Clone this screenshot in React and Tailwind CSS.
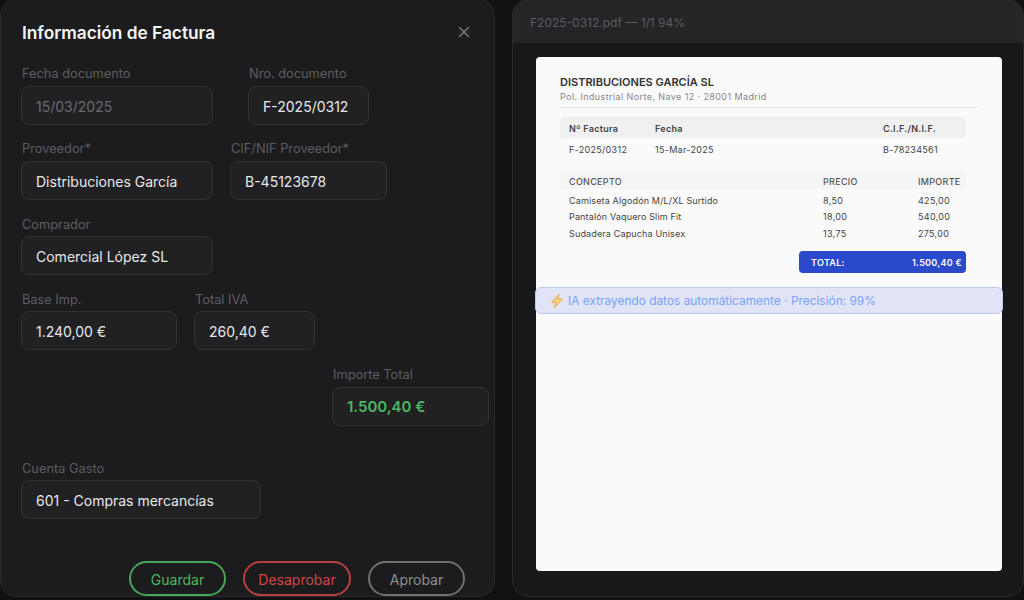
import React from 'react'
import { X } from 'lucide-react'

function Field({ label, value, width, dim, green, tight, className = '' }) {
  return (
    <div className={`flex flex-col ${className}`} style={{ width }}>
      <label className={`h-[13px] pl-px text-[12.8px] leading-[13px] text-[#5c5c61] ${tight ? 'mb-[5px]' : 'mb-[6px]'}`}>{label}</label>
      <div className={`h-[39px] flex items-center pl-[14px] pt-[2px] rounded-lg border border-[#323236] bg-[#212123] text-[14px] ${dim ? 'text-[#6a6a6f]' : green ? 'text-[#4cb860] font-semibold text-[15px]' : 'text-[#e8e8ea]'}`}>
        {value}
      </div>
    </div>
  )
}

function ActionButton({ children, className }) {
  return (
    <button className={`h-[35px] pt-[1px] rounded-full border-2 text-[14px] ${className}`}>{children}</button>
  )
}

const LINES = [
  { name: 'Camiseta Algodón M/L/XL Surtido', price: '8,50', total: '425,00', mt: 'mt-[6px]' },
  { name: 'Pantalón Vaquero Slim Fit', price: '18,00', total: '540,00', mt: 'mt-[4px]' },
  { name: 'Sudadera Capucha Unisex', price: '13,75', total: '275,00', mt: 'mt-[5px]' },
]

function InvoiceForm() {
  return (
    <section className="w-[495px] h-[598px] -mt-px shrink-0 rounded-2xl border border-[#2a2a2d] bg-[#1c1c1e] pl-[20px] pr-[5px] flex flex-col">
      <div className="flex items-center justify-between h-[24px] mt-[20px] pr-[16px]">
        <h1 className="pl-px pt-px text-[17.3px] font-semibold text-[#f5f5f5]">Información de Factura</h1>
        <X size={18} strokeWidth={2} className="text-[#77777c]" />
      </div>
      <div className="flex gap-[35px] mt-[23px]">
        <Field label="Fecha documento" value="15/03/2025" width={192} dim />
        <Field label="Nro. documento" value="F-2025/0312" width={121} />
      </div>
      <div className="flex gap-[17px] mt-[17px]">
        <Field label="Proveedor*" value="Distribuciones García" width={192} />
        <Field label="CIF/NIF Proveedor*" value="B-45123678" width={157} />
      </div>
      <Field label="Comprador" value="Comercial López SL" width={192} tight className="mt-[18px]" />
      <div className="flex gap-[17px] mt-[18px]">
        <Field label="Base Imp." value="1.240,00 €" width={156} tight />
        <Field label="Total IVA" value="260,40 €" width={121} tight />
      </div>
      <Field label="Importe Total" value="1.500,40 €" width={157} green className="mt-[18px] ml-[311px]" />
      <Field label="Cuenta Gasto" value="601 - Compras mercancías" width={240} tight className="mt-[36px]" />
      <div className="flex gap-[17px] mt-[42px] pl-[108px]">
        <ActionButton className="w-[97px] border-[#47a558] text-[#4cb860]">Guardar</ActionButton>
        <ActionButton className="w-[108px] border-[#b84040] text-[#d04545]">Desaprobar</ActionButton>
        <ActionButton className="w-[97px] border-[#6f6f74] text-[#8e8e93]">Aprobar</ActionButton>
      </div>
    </section>
  )
}

function PdfPage() {
  return (
    <div className="h-[514px] rounded bg-[#fafafa] pt-[19px] flex flex-col">
      <div className="mx-[24px] h-[32px] border-b border-[#e6e6e6]">
        <p className="text-[11px] leading-[13px] font-semibold text-[#333]">DISTRIBUCIONES GARCÍA SL</p>
        <p className="text-[9px] leading-[11px] mt-[2px] tracking-[0.4px] text-[#888]">Pol. Industrial Norte, Nave 12 · 28001 Madrid</p>
      </div>
      <div className="ml-[24px] w-[406px] mt-[9px] text-[9px] tracking-[0.3px]">
        <div className="flex items-center h-[21px] pl-[9px] pt-[3px] rounded-sm bg-[#f0f0f0] font-semibold text-[#444]">
          <span className="w-[86px]">Nº Factura</span>
          <span className="w-[228px]">Fecha</span>
          <span>C.I.F./N.I.F.</span>
        </div>
        <div className="flex items-center h-[22px] pl-[9px] pt-[2px] text-[#444]">
          <span className="w-[86px]">F-2025/0312</span>
          <span className="w-[228px]">15-Mar-2025</span>
          <span>B-78234561</span>
        </div>
      </div>
      <div className="ml-[24px] w-[406px] mt-[10px] text-[9px] tracking-[0.3px]">
        <div className="flex items-center h-[19px] pl-[9px] pt-[4px] bg-[#f5f5f5] font-medium text-[#555]">
          <span className="w-[254px]">CONCEPTO</span>
          <span className="w-[95px]">PRECIO</span>
          <span>IMPORTE</span>
        </div>
        {LINES.map(line => (
          <div key={line.name} className={`flex items-center h-[12px] pl-[9px] text-[#444] ${line.mt}`}>
            <span className="w-[254px] tracking-[0.15px]">{line.name}</span>
            <span className="w-[95px]">{line.price}</span>
            <span>{line.total}</span>
          </div>
        ))}
        <div className="flex justify-end mt-[11px]">
          <div className="w-[167px] h-[22px] flex items-center justify-between pl-[12px] pr-[4px] pt-[2px] rounded-sm bg-[#2b4acb] text-white font-semibold">
            <span>TOTAL:</span>
            <span>1.500,40 €</span>
          </div>
        </div>
      </div>
      <div className="-mx-px mt-[14px] h-[27px] flex items-center gap-[3px] pl-[13px] pt-[1px] rounded-md border border-[#bcc9f0] bg-[#e0e4f6] text-[11.9px] text-[#7aa2f7]">
        <svg width="16" height="16" viewBox="0 0 24 24" fill="#fbd87f" stroke="#eda23f" strokeWidth="1.5" strokeLinejoin="round">
          <path d="M15 2 4 14h7l-3 8 12-13h-7l2-7Z" />
        </svg>
        <span>IA extrayendo datos automáticamente · Precisión: 99%</span>
      </div>
    </div>
  )
}

function PdfPreview() {
  return (
    <section className="w-[512px] h-[598px] -mt-px shrink-0 rounded-2xl border border-[#2a2a2d] bg-[#18181a] overflow-hidden flex flex-col">
      <div className="h-[43px] flex items-center pl-[17px] pt-[3px] bg-[#252527] text-[12px] text-[#5c5c61]">
        F2025-0312.pdf — 1/1 94%
      </div>
      <div className="ml-[23px] mr-[21px] mt-[14px]">
        <PdfPage />
      </div>
    </section>
  )
}

export default function App() {
  return (
    <div className="w-[1024px] h-[600px] overflow-hidden bg-[#111113] flex gap-[17px] font-['Inter',sans-serif]">
      <InvoiceForm />
      <PdfPreview />
    </div>
  )
}
